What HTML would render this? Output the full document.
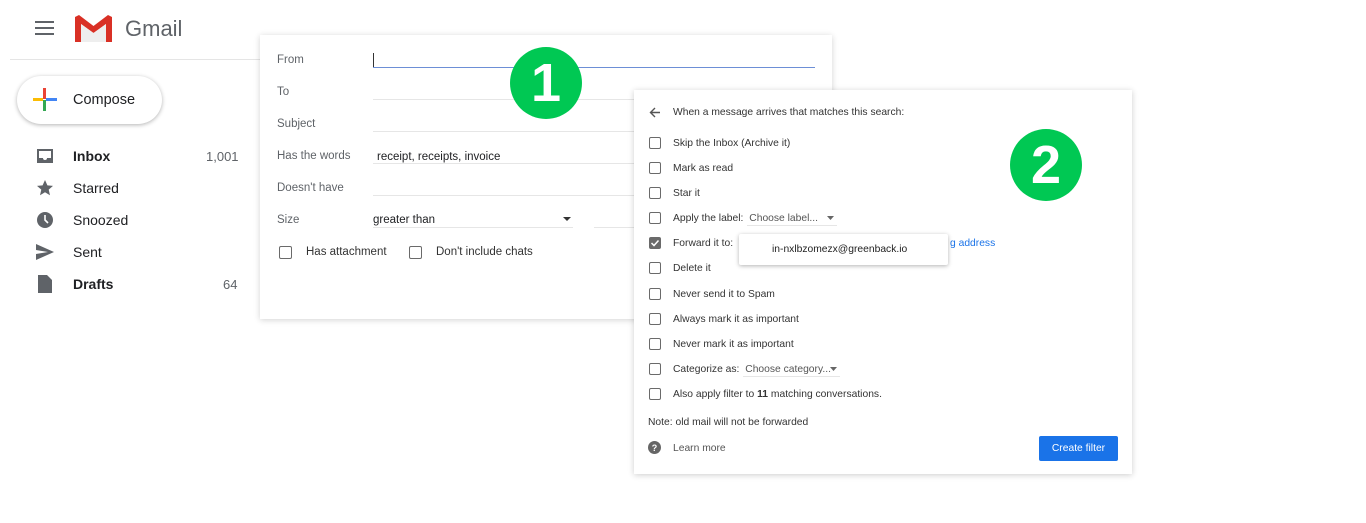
<!DOCTYPE html>
<html><head><style>
*{margin:0;padding:0;box-sizing:border-box}
body{width:1366px;height:523px;background:#fff;font-family:"Liberation Sans",Arial,sans-serif;position:relative;overflow:hidden;color:#202124}
.a{position:absolute}
.nav{font-size:14px;color:#202124}
.p1{left:260px;top:35px;width:572px;height:284px;background:#fff;box-shadow:0 1px 6px rgba(0,0,0,.18)}
.lbl{font-size:11.5px;color:#5f6368}
.ln{height:1px;background:#e6e6e6}
.p2{left:634px;top:90px;width:498px;height:384px;background:#fff;box-shadow:0 1px 6px rgba(0,0,0,.2)}
.cb{width:12px;height:12px;border:1.5px solid #6a6a6a;border-radius:2px}
.t{font-size:10.3px;color:#333}
.circ{width:72px;height:72px;border-radius:50%;background:#00c853;color:#fff;font-size:54px;font-weight:bold;text-align:center;line-height:72px}
</style></head><body>
<div class="a" style="left:10px;top:59px;width:250px;height:1px;background:#e5e5e5"></div>
<svg class="a" style="left:35px;top:21px" width="20" height="14"><rect y="0" width="19" height="2" fill="#5f6368"/><rect y="6" width="19" height="2" fill="#5f6368"/><rect y="12" width="19" height="2" fill="#5f6368"/></svg>
<svg class="a" style="left:75px;top:15px" width="37" height="27" viewBox="0 0 37 27"><path d="M0 2 L4 0 L18.5 11 L33 0 L37 2 V27 H31 V9 L18.5 18 L6 9 V27 H0Z" fill="#d93025"/><path d="M6 9 L18.5 18 L31 9 V27 H6Z" fill="#eee"/></svg>
<div class="a" style="left:125px;top:16px;font-size:22px;color:#5f6368">Gmail</div>
<div class="a" style="left:17px;top:76px;width:145px;height:48px;border-radius:24px;background:#fff;box-shadow:0 1px 4px rgba(0,0,0,.3)"></div>
<svg class="a" style="left:33px;top:88px" width="24" height="24"><rect x="10" y="0" width="3" height="11" fill="#ea4335"/><rect x="10" y="12" width="3" height="11" fill="#34a853"/><rect x="0" y="10" width="10" height="3" fill="#fbbc04"/><rect x="13" y="10" width="11" height="3" fill="#4285f4"/></svg>
<div class="a nav" style="left:73px;top:92px;font-size:14.5px">Compose</div>
<svg class="a" style="left:36px;top:148px" width="18" height="16"><path d="M1 1h16v14H1z M3 3v7h4a2 2 0 0 0 4 0h4V3z" fill="#5f6368" fill-rule="evenodd"/></svg>
<div class="a nav" style="left:73px;top:148px;font-weight:bold">Inbox</div><div class="a nav" style="left:206px;top:149px;font-size:13px;color:#5f6368">1,001</div>
<svg class="a" style="left:36px;top:179px" width="18" height="18"><path d="M9 1l2.4 5.4 5.6.5-4.3 3.7 1.3 5.6L9 13.3 4 16.2l1.3-5.6L1 6.9l5.6-.5z" fill="#5f6368"/></svg>
<div class="a nav" style="left:73px;top:180px">Starred</div>
<svg class="a" style="left:36px;top:211px" width="18" height="18"><circle cx="9" cy="9" r="8" fill="#5f6368"/><path d="M9 4v5l3 3" stroke="#fff" stroke-width="1.6" fill="none"/></svg>
<div class="a nav" style="left:73px;top:212px">Snoozed</div>
<svg class="a" style="left:36px;top:244px" width="18" height="16"><path d="M0 0l18 8-18 8v-6l12-2-12-2z" fill="#5f6368"/></svg>
<div class="a nav" style="left:73px;top:244px">Sent</div>
<svg class="a" style="left:38px;top:275px" width="14" height="18"><path d="M0 0h9l5 5v13H0z" fill="#5f6368"/></svg>
<div class="a nav" style="left:73px;top:276px;font-weight:bold">Drafts</div><div class="a nav" style="left:223px;top:277px;font-size:13px;color:#5f6368">64</div>

<div class="a p1"></div>
<div class="a lbl" style="left:277px;top:54px">From</div>
<div class="a" style="left:373px;top:53px;width:1px;height:14px;background:#333"></div>
<div class="a" style="left:373px;top:67px;width:442px;height:1px;background:#6d8fd6"></div>
<div class="a lbl" style="left:277px;top:86px">To</div><div class="a ln" style="left:373px;top:99px;width:261px"></div>
<div class="a lbl" style="left:277px;top:118px">Subject</div><div class="a ln" style="left:373px;top:131px;width:261px"></div>
<div class="a lbl" style="left:277px;top:150px">Has the words</div><div class="a ln" style="left:373px;top:163px;width:261px"></div>
<div class="a" style="left:377px;top:151px;font-size:11.5px;color:#202124">receipt, receipts, invoice</div>
<div class="a lbl" style="left:277px;top:182px">Doesn't have</div><div class="a ln" style="left:373px;top:195px;width:261px"></div>
<div class="a lbl" style="left:277px;top:214px">Size</div>
<div class="a" style="left:373px;top:214px;font-size:11.5px;color:#202124">greater than</div>
<svg class="a" style="left:563px;top:217px" width="8" height="5"><path d="M0 0h8L4 4z" fill="#333"/></svg>
<div class="a ln" style="left:373px;top:227px;width:200px"></div><div class="a ln" style="left:594px;top:227px;width:40px"></div>
<div class="a cb" style="left:279px;top:246px;width:13px;height:13px"></div><div class="a" style="left:306px;top:246px;font-size:11.5px;color:#333">Has attachment</div>
<div class="a cb" style="left:409px;top:246px;width:13px;height:13px"></div><div class="a" style="left:436px;top:246px;font-size:11.5px;color:#333">Don't include chats</div>
<div class="a circ" style="left:510px;top:47px">1</div>

<div class="a p2"></div>
<svg class="a" style="left:649px;top:107px" width="12" height="11"><path d="M11 5.5H2M6 1L1.5 5.5 6 10" stroke="#555" stroke-width="1.4" fill="none"/></svg>
<div class="a t" style="left:673px;top:107px">When a message arrives that matches this search:</div>
<div class="a cb" style="left:649px;top:137px"></div><div class="a t" style="left:673px;top:138px">Skip the Inbox (Archive it)</div>
<div class="a cb" style="left:649px;top:162px"></div><div class="a t" style="left:673px;top:163px">Mark as read</div>
<div class="a cb" style="left:649px;top:187px"></div><div class="a t" style="left:673px;top:188px">Star it</div>
<div class="a cb" style="left:649px;top:212px"></div><div class="a t" style="left:673px;top:213px">Apply the label: <span style="color:#555;margin-left:3px">Choose label...</span></div>
<svg class="a" style="left:827px;top:216px" width="7" height="4"><path d="M0 0h7L3.5 4z" fill="#666"/></svg>
<div class="a ln" style="left:747px;top:225px;width:90px"></div>
<div class="a" style="left:649px;top:237px;width:12px;height:12px;background:#6a6a6a;border-radius:2px"></div>
<svg class="a" style="left:650px;top:238px" width="10" height="10"><path d="M1.5 5l2.5 2.5 4.5-5" stroke="#fff" stroke-width="1.5" fill="none"/></svg>
<div class="a t" style="left:673px;top:238px">Forward it to:</div>
<div class="a" style="left:950px;top:238px;font-size:10.3px;color:#1a73e8">g address</div>
<div class="a" style="left:739px;top:234px;width:209px;height:31px;background:#fff;box-shadow:0 1px 4px rgba(0,0,0,.3);border-radius:2px"></div>
<div class="a t" style="left:772px;top:244px;color:#222">in-nxlbzomezx@greenback.io</div>
<div class="a cb" style="left:649px;top:262px"></div><div class="a t" style="left:673px;top:263px">Delete it</div>
<div class="a cb" style="left:649px;top:288px"></div><div class="a t" style="left:673px;top:289px">Never send it to Spam</div>
<div class="a cb" style="left:649px;top:313px"></div><div class="a t" style="left:673px;top:314px">Always mark it as important</div>
<div class="a cb" style="left:649px;top:338px"></div><div class="a t" style="left:673px;top:339px">Never mark it as important</div>
<div class="a cb" style="left:649px;top:363px"></div><div class="a t" style="left:673px;top:364px">Categorize as: <span style="color:#555;margin-left:3px">Choose category...</span></div>
<svg class="a" style="left:830px;top:367px" width="7" height="4"><path d="M0 0h7L3.5 4z" fill="#666"/></svg>
<div class="a ln" style="left:743px;top:376px;width:97px"></div>
<div class="a cb" style="left:649px;top:388px"></div><div class="a t" style="left:673px;top:389px">Also apply filter to <b>11</b> matching conversations.</div>
<div class="a t" style="left:648px;top:417px">Note: old mail will not be forwarded</div>
<svg class="a" style="left:648px;top:441px" width="13" height="13"><circle cx="6.5" cy="6.5" r="6.5" fill="#666"/><text x="6.5" y="10" font-size="9" font-weight="bold" fill="#fff" text-anchor="middle" font-family="Liberation Sans">?</text></svg>
<div class="a t" style="left:673px;top:443px;color:#555">Learn more</div>
<div class="a" style="left:1039px;top:436px;width:79px;height:25px;background:#1a73e8;border-radius:2px;color:#fff;font-size:10.3px;text-align:center;line-height:25px">Create filter</div>
<div class="a circ" style="left:1010px;top:129px">2</div>
</body></html>
